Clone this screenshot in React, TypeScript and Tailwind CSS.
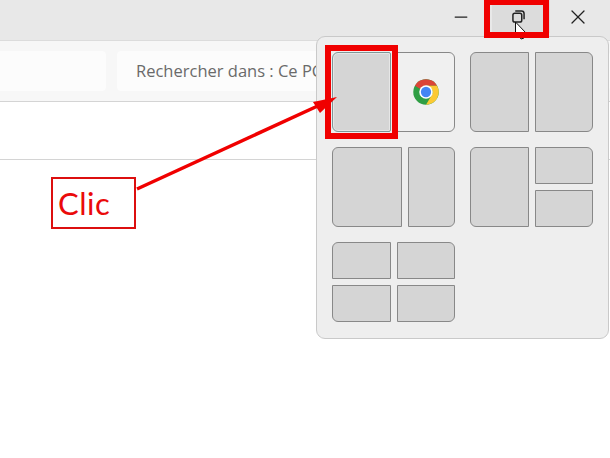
import { Minus, X } from 'lucide-react'

function Tile({ className = '' }: { className?: string }) {
  return <div className={`border border-[#888888] bg-[#d5d5d5] ${className}`} />
}

function ChromeLogo() {
  return (
    <svg width="26" height="26" viewBox="0 0 48 48">
      <circle cx="24" cy="24" r="23.5" fill="#2f9e44" />
      <path d="M24 .5A23.5 23.5 0 0 1 44.4 12.3H24A12 12 0 0 0 13.6 18.3L3.6 12.3A23.5 23.5 0 0 1 24 .5z" fill="#db4437" />
      <path d="M44.4 12.3A23.5 23.5 0 0 1 24 47.5L34.4 30A12 12 0 0 0 34.4 18L24 12.3z" fill="#fcc934" />
      <circle cx="24" cy="24" r="12.5" fill="#fff" />
      <circle cx="24" cy="24" r="9.5" fill="#4285f4" />
    </svg>
  )
}

export default function App() {
  return (
    <div className="relative h-[458px] w-[610px] overflow-hidden bg-white font-['Open_Sans',sans-serif]">
      {/* Title bar */}
      <div className="flex h-[41px] justify-end border-b border-[#dcdcdc] bg-[#e8e8e8] pr-[2px]">
        <button className="flex h-[33px] w-[58px] items-center justify-center pr-[4px] text-[#222]">
          <Minus className="h-[20px] w-[20px]" strokeWidth={1.5} />
        </button>
        <button className="flex h-[33px] w-[58px] items-center justify-center bg-[#dcdcdc] pr-[5px]">
          <svg width="13" height="13" viewBox="0 0 14 14" fill="none" stroke="#222" strokeWidth="1.6">
            <rect x="1" y="3.5" width="9.5" height="9.5" rx="2" />
            <path d="M3.5 1.2h6.7a2.8 2.8 0 0 1 2.8 2.8V10" />
          </svg>
        </button>
        <button className="flex h-[33px] w-[58px] items-center justify-center pr-[2px] text-[#222]">
          <X className="h-[24px] w-[24px]" strokeWidth={1.3} />
        </button>
      </div>

      {/* Toolbar with address and search boxes */}
      <div className="flex h-[61px] items-center gap-[11px] border-b border-[#d4d4d4] bg-[#f7f7f7]">
        <div className="-ml-[10px] h-[40px] w-[116px] rounded-[4px] bg-[#fcfcfc]" />
        <div className="flex h-[40px] flex-1 items-center rounded-[4px] bg-[#fcfcfc] pl-[19px] text-[16.5px] whitespace-nowrap text-[#6a6a6a]">
          Rechercher dans : Ce PC
        </div>
      </div>

      {/* Command row */}
      <div className="h-[58px] border-b border-[#d4d4d4] bg-white" />

      {/* Snap layouts flyout */}
      <div className="absolute top-[36px] left-[316px] grid w-[293px] grid-cols-[123px_123px] gap-[15px] rounded-[9px] border border-[#c9c9c9] bg-[#eeeeee] p-[15px] pb-[16px]">
        <div className="flex h-[80px] gap-[6px]">
          <div className="w-[59px] rounded-l-[6px] rounded-r-[2px] border border-[#7f9696] bg-[#d5d5d5] shadow-[inset_0_0_0_1px_#e6e6e6]" />
          <div className="flex w-[58px] items-center justify-center rounded-l-[1px] rounded-r-[6px] border border-[#888888] bg-[#f0f0f0] pr-[1px]">
            <ChromeLogo />
          </div>
        </div>

        <div className="flex h-[80px] gap-[6px]">
          <Tile className="w-[59px] rounded-l-[6px]" />
          <Tile className="w-[58px] rounded-r-[6px]" />
        </div>

        <div className="flex h-[80px] gap-[6px]">
          <Tile className="w-[70px] rounded-l-[6px]" />
          <Tile className="w-[47px] rounded-r-[6px]" />
        </div>

        <div className="flex h-[80px] gap-[6px]">
          <Tile className="w-[59px] rounded-l-[6px]" />
          <div className="flex w-[58px] flex-col gap-[6px]">
            <Tile className="h-[37px] rounded-tr-[6px]" />
            <Tile className="h-[37px] rounded-br-[6px]" />
          </div>
        </div>

        <div className="grid h-[80px] grid-cols-[59px_58px] grid-rows-[37px_37px] gap-[6px]">
          <Tile className="rounded-tl-[6px]" />
          <Tile className="rounded-tr-[6px]" />
          <Tile className="rounded-bl-[6px]" />
          <Tile className="rounded-br-[6px]" />
        </div>
      </div>

      {/* Mouse pointer */}
      <svg className="absolute top-[20px] left-[512px]" width="18" height="22" viewBox="0 0 18 22">
        <path d="M3.5 2v15l3 -2.5 2.5 4.5 3 -1 -2.5 -5h4.5z" fill="#fff" stroke="#111" strokeWidth="1" />
      </svg>

      {/* Red annotations */}
      <div className="absolute top-0 left-[484px] h-[38px] w-[65px] border-x-[6px] border-t-[5px] border-b-[6px] border-[#f00000]" />
      <div className="absolute top-[45px] left-[325px] h-[94px] w-[73px] border-[6px] border-[#f00000]" />

      <svg className="absolute top-0 left-0" width="610" height="458" viewBox="0 0 610 458">
        <line x1="137" y1="189" x2="322" y2="104" stroke="#f00000" strokeWidth="3.5" />
        <polygon points="337,97 313,102 320,113" fill="#f00000" />
      </svg>

      <div className="absolute top-[177px] left-[51px] flex h-[52px] w-[85px] items-center border-2 border-[#dc0f0f] bg-white pl-[5px] font-['Lato',sans-serif] text-[31px] tracking-[0.5px] text-[#ea0a0a]">
        Clic
      </div>
    </div>
  )
}
